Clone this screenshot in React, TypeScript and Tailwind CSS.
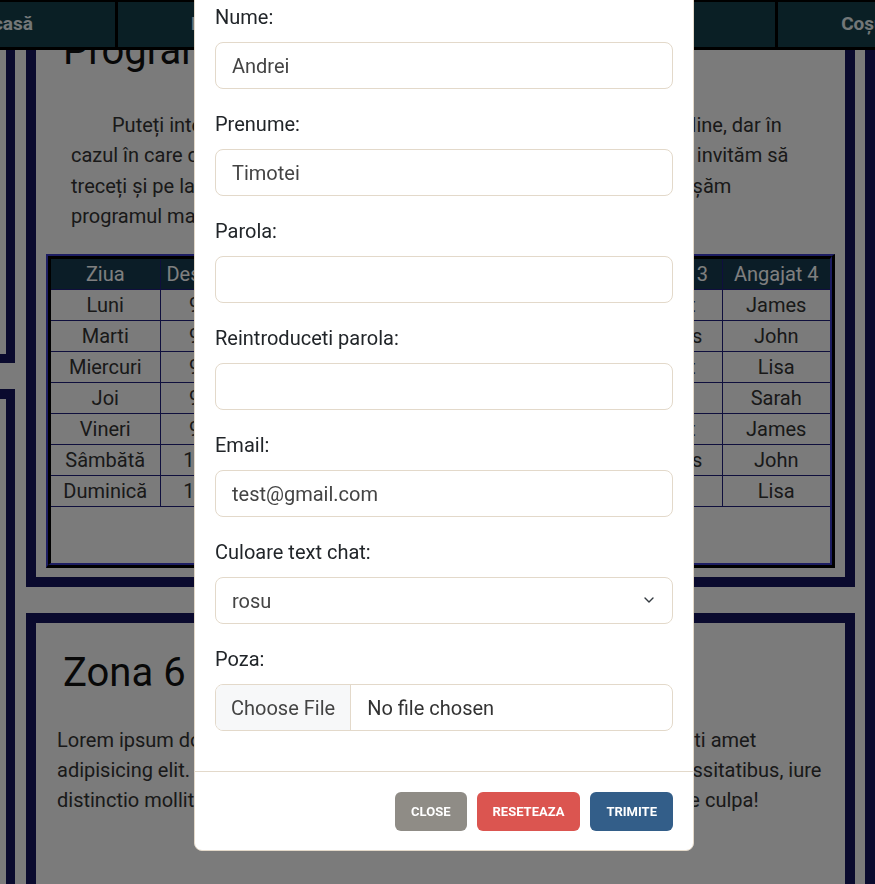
import React from 'react';

const navItems = ['Acasă', 'Produse', 'Despre noi', 'Login', 'Coșul meu'];

const program = [
  ['Luni', '9:00 h', '18:00 h', 'Maria', 'Andrei', 'Robert', 'James'],
  ['Marti', '9:00 h', '18:00 h', 'Elena', 'Mihai', 'Thomas', 'John'],
  ['Miercuri', '9:00 h', '18:00 h', 'Maria', 'Andrei', 'Robert', 'Lisa'],
  ['Joi', '9:00 h', '18:00 h', 'Elena', 'Mihai', 'Daniel', 'Sarah'],
  ['Vineri', '9:00 h', '18:00 h', 'Maria', 'Andrei', 'Robert', 'James'],
  ['Sâmbătă', '10:00 h', '14:00 h', 'Elena', 'Mihai', 'Thomas', 'John'],
  ['Duminică', '10:00 h', '14:00 h', 'Maria', 'Andrei', 'Daniel', 'Lisa'],
];

const headers = ['Ziua', 'Deschidere', 'Închidere', 'Angajat 1', 'Angajat 2', 'Angajat 3', 'Angajat 4'];

const fields = [
  { label: 'Nume:', type: 'text', value: 'Andrei' },
  { label: 'Prenume:', type: 'text', value: 'Timotei' },
  { label: 'Parola:', type: 'password', value: '' },
  { label: 'Reintroduceti parola:', type: 'password', value: '' },
  { label: 'Email:', type: 'email', value: 'test@gmail.com' },
];

const App: React.FC = () => {
  return (
    <div className="h-screen overflow-hidden bg-[#f6f6f6] font-[Roboto,sans-serif]">
      {/* page */}
      <div className="flex h-[884px]">
        <div className="w-[15px] shrink-0 flex flex-col gap-[26px]">
          <div className="h-[363px] shrink-0 border-r-[9px] border-b-[9px] border-[#14145c]" />
          <div className="h-[600px] shrink-0 border-r-[9px] border-t-[10px] border-[#14145c]" />
        </div>

        <div className="ml-[11px] w-[829px] shrink-0 flex flex-col">
          <section className="h-[587px] shrink-0 border-[10px] border-[#14145c]">
            <h2 className="mt-[17px] pl-[27px] text-[40px] leading-[48px] text-[#111]">Program</h2>
            <p className="mt-[35px] px-[35px] indent-[41px] text-[20px] leading-[30.4px] text-[#333]">
              Puteți interacționa cu noi și via intermediul magazinului nostru online, dar în cazul în care doriți
              să ne vizitați fizic sau să vedeți produsele pe viu, vă invităm să treceți și pe la sediul nostru
              centrale din centrul orașului. Mai jos vă afișăm programul magazinului:
            </p>
            <div className="mx-[10px] mt-[22px] h-[314px] border-t-2 border-l-2 border-r-[3px] border-b-[3px] border-t-[#3a3ac4] border-l-[#3a3ac4] border-r-black border-b-black">
              <div className="h-full border-t-[3px] border-l-[3px] border-r-2 border-b-2 border-t-black border-l-black border-r-[#3a3ac4] border-b-[#3a3ac4]">
                <table className="w-full table-fixed border-collapse text-[20px] leading-[30px] text-[#333]">
                  <thead>
                    <tr className="h-[31px] bg-[#163a4e] text-white">
                      {headers.map((h, i) => (
                        <th
                          key={h}
                          className={`border border-t-0 border-[#1f1f7a] font-normal ${i === 0 ? 'w-[109px] border-l-0' : ''} ${i === 6 ? 'w-[108px] border-r-0' : ''}`}
                        >
                          {h}
                        </th>
                      ))}
                    </tr>
                  </thead>
                  <tbody>
                    {program.map((row) => (
                      <tr key={row[0]} className="h-[31px]">
                        {row.map((cell, i) => (
                          <td
                            key={i}
                            className={`border border-[#1f1f7a] text-center ${i === 0 ? 'border-l-0' : ''} ${i === 6 ? 'border-r-0' : ''}`}
                          >
                            {cell}
                          </td>
                        ))}
                      </tr>
                    ))}
                  </tbody>
                </table>
              </div>
            </div>
          </section>

          <section className="mt-[26px] h-[400px] shrink-0 border-[10px] border-[#14145c]">
            <h2 className="mt-[26px] pl-[27px] text-[40px] leading-[48px] text-[#111]">Zona 6</h2>
            <p className="mt-[28px] px-[21px] text-[20px] leading-[30px] text-[#333]">
              Lorem ipsum dolor sit amet consectetur adipisicing elit. Dolorum corrupti amet adipisicing elit. Minima
              nulla quibusdam eos sint neque animi ipsa necessitatibus, iure distinctio mollitia eaque tempora aut
              labore, eveniet reprehenderit dolore culpa!
            </p>
          </section>
        </div>

        <div className="ml-[10px] flex-1 border-l-[10px] border-[#14145c]" />
      </div>

      {/* nav */}
      <nav className="fixed top-0 left-0 z-10 flex h-[50px] w-[1200px] -ml-[102px] border-t-2 border-b-[3px] border-black bg-[#143e4a]">
        {navItems.map((item) => (
          <a
            key={item}
            className="flex w-[220px] shrink-0 items-center justify-center border-r-[3px] border-black text-[19px] font-bold text-[#e6eef0]"
          >
            {item}
          </a>
        ))}
      </nav>

      {/* backdrop */}
      <div className="fixed inset-0 z-40 bg-black/50" />

      {/* modal */}
      <div className="fixed inset-0 z-50 flex items-end pl-[194px] pb-[33px]">
        <div className="w-[500px] shrink-0 rounded-lg border border-[#e3d9ca] bg-white text-[#212529]">
          <div className="px-[20px] pt-[20px] pb-[20px]">
            {fields.map((f) => (
              <div key={f.label} className="mb-[20px]">
                <label className="mb-[10px] block text-[20px] leading-[30px]">{f.label}</label>
                <input
                  type={f.type}
                  defaultValue={f.value}
                  className="block h-[47px] w-full rounded-lg border border-[#e3d9ca] px-4 text-[20px] text-[#444] outline-none"
                />
              </div>
            ))}
            <div className="mb-[20px]">
              <label className="mb-[10px] block text-[20px] leading-[30px]">Culoare text chat:</label>
              <div className="relative">
                <select className="block h-[47px] w-full appearance-none rounded-lg border border-[#e3d9ca] bg-white px-4 text-[20px] text-[#444] outline-none">
                  <option>rosu</option>
                  <option>verde</option>
                  <option>albastru</option>
                </select>
                <svg
                  className="pointer-events-none absolute right-[19px] top-[20px]"
                  width="10"
                  height="6"
                  viewBox="0 0 10 6"
                  fill="none"
                >
                  <path d="M1 1l4 4 4-4" stroke="#343a40" strokeWidth="1.4" strokeLinecap="round" strokeLinejoin="round" />
                </svg>
              </div>
            </div>
            <div className="mb-[20px]">
              <label className="mb-[10px] block text-[20px] leading-[30px]">Poza:</label>
              <label className="flex h-[47px] w-full overflow-hidden rounded-lg border border-[#e3d9ca] text-[20px]">
                <input type="file" className="sr-only" />
                <span className="flex items-center border-r border-[#e3d9ca] bg-[#f7f8f9] px-[15px] text-[#444]">Choose File</span>
                <span className="flex items-center pl-4 text-[#333]">No file chosen</span>
              </label>
            </div>
          </div>
          <div className="flex justify-end gap-[10px] border-t border-[#e3d9ca] px-[20px] pt-[20px] pb-[19px]">
            <button className="h-[39px] rounded-md bg-[#8f8c86] px-4 text-[13px] font-bold text-white">CLOSE</button>
            <button className="h-[39px] rounded-md bg-[#db5550] px-4 text-[13px] font-bold text-white">RESETEAZA</button>
            <button className="h-[39px] rounded-md bg-[#335e89] px-4 text-[13px] font-bold text-white">TRIMITE</button>
          </div>
        </div>
      </div>
    </div>
  );
};

export default App;
